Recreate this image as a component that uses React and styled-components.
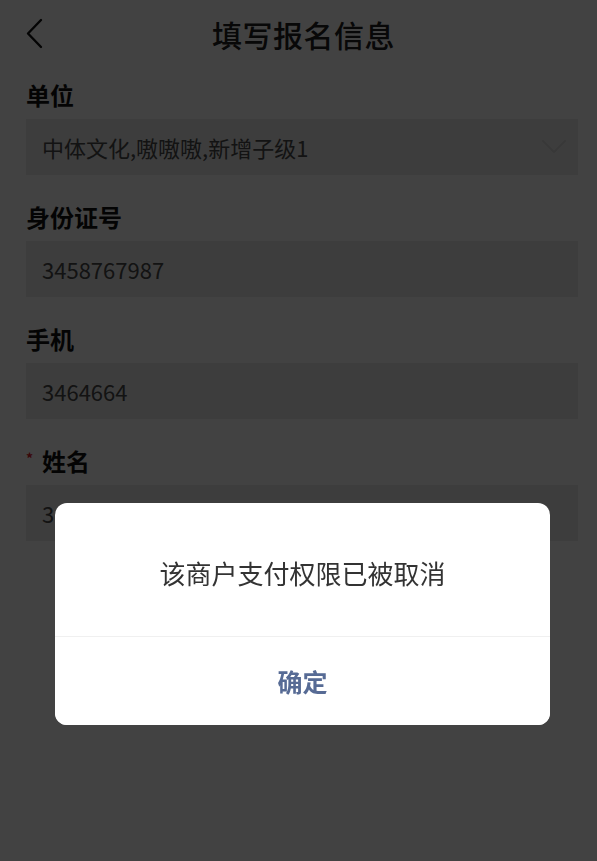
import React from 'react'
import styled, { createGlobalStyle } from 'styled-components'

const GlobalStyle = createGlobalStyle`
    html, body {
        margin : 0;
        padding : 0;
        background : #ffffff;
        font-family : "Noto Sans CJK SC", "Noto Sans", sans-serif;
    }
    * {
        box-sizing : border-box;
    }
`

const Spage = styled.div`
    position : relative;
    width : 597px;
    min-height : 861px;
    background : #ffffff;
`

const Sheader = styled.header`
    height : 68px;
    display : grid;
    grid-template-columns : 48px 1fr 38px;
    align-items : center;
`

const Sback = styled.button`
    border : none;
    background : none;
    padding : 0 0 2px 25px;
    display : flex;
    align-items : center;
    cursor : pointer;
`

const Stitle = styled.h1`
    margin : 0;
    text-align : center;
    font-size : 30px;
    font-weight : 500;
    color : #222222;
    letter-spacing : 0.5px;
`

const Sform = styled.div`
    display : flex;
    flex-direction : column;
    gap : 27px;
    padding : 12px 19px 0 26px;
`

const Sfield = styled.div`
    display : flex;
    flex-direction : column;
`

const Slabel = styled.div`
    height : 30px;
    line-height : 30px;
    margin-bottom : 9px;
    font-size : 24px;
    font-weight : 700;
    color : #111111;
    display : flex;
    align-items : center;
`

const Sstar = styled.span`
    width : 16px;
    font-size : 14px;
    color : #e0202a;
    line-height : 1;
    margin-top : -6px;
`

const Sbox = styled.div`
    height : 56px;
    display : flex;
    align-items : center;
    justify-content : space-between;
    padding : 0 10px 0 16px;
    background : #ebebeb;
    font-size : 22px;
    color : #4a4a4a;
`

const Soverlay = styled.div`
    position : fixed;
    inset : 0;
    background : rgba(0, 0, 0, 0.74);
    display : flex;
    justify-content : center;
    align-items : flex-start;
    padding : 503px 0 0 8px;
`

const Sdialog = styled.div`
    width : 495px;
    background : #ffffff;
    border-radius : 12px;
    overflow : hidden;
`

const Smessage = styled.div`
    height : 134px;
    padding-top : 6px;
    display : flex;
    align-items : center;
    justify-content : center;
    font-size : 26px;
    color : #333333;
    border-bottom : 1px solid #f0f0f0;
`

const Sconfirm = styled.button`
    width : 100%;
    height : 88px;
    border : none;
    background : #ffffff;
    font-family : inherit;
    font-size : 25px;
    font-weight : 700;
    color : #576b95;
    cursor : pointer;
`

const fields = [
    { label : '单位', value : '中体文化,嗷嗷嗷,新增子级1', select : true },
    { label : '身份证号', value : '3458767987' },
    { label : '手机', value : '3464664' },
    { label : '姓名', value : '3', required : true },
]

function App() {
    return (
        <>
            <GlobalStyle />
            <Spage>
                <Sheader>
                    <Sback>
                        <svg width="19" height="31" viewBox="0 0 19 31" fill="none">
                            <path d="M16 2 L3 15.5 L16 29" stroke="#111" strokeWidth="2.4" strokeLinecap="round" strokeLinejoin="round" />
                        </svg>
                    </Sback>
                    <Stitle>填写报名信息</Stitle>
                    <span />
                </Sheader>
                <Sform>
                    {fields.map((f) => (
                        <Sfield key={f.label}>
                            <Slabel>
                                {f.required ? <Sstar>*</Sstar> : null}
                                {f.label}
                            </Slabel>
                            <Sbox>
                                <span>{f.value}</span>
                                {f.select ? (
                                    <svg width="28" height="18" viewBox="0 0 28 18" fill="none">
                                        <path d="M3 3 L14 14 L25 3" stroke="#d6d6d6" strokeWidth="1.8" strokeLinecap="round" strokeLinejoin="round" />
                                    </svg>
                                ) : null}
                            </Sbox>
                        </Sfield>
                    ))}
                </Sform>
            </Spage>
            <Soverlay>
                <Sdialog>
                    <Smessage>该商户支付权限已被取消</Smessage>
                    <Sconfirm>确定</Sconfirm>
                </Sdialog>
            </Soverlay>
        </>
    )
}

export default App
